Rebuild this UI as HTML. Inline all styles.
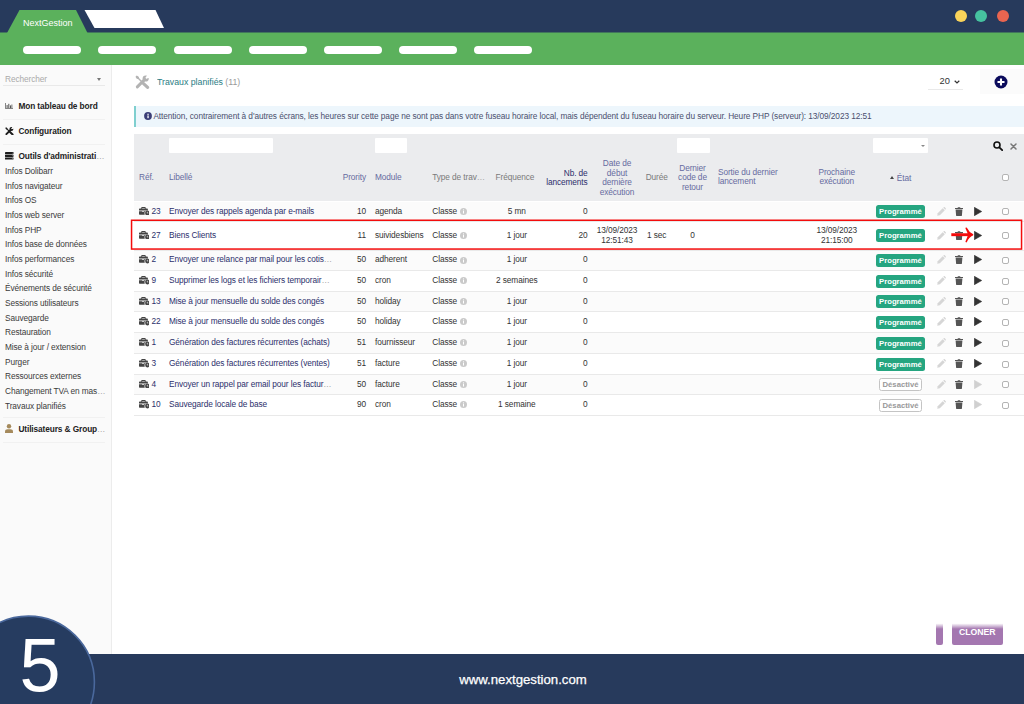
<!DOCTYPE html>
<html lang="fr">
<head>
<meta charset="utf-8">
<title>NextGestion - Travaux planifiés</title>
<style>
*{box-sizing:border-box;margin:0;padding:0}
html,body{width:1024px;height:704px;overflow:hidden;background:#fff}
body{font-family:"Liberation Sans",sans-serif;font-size:8px;color:#333;position:relative}
.abs{position:absolute}
#navy{left:0;top:0;width:1024px;height:33px;background:#273a5c}
#green{left:0;top:32px;width:1024px;height:33px;background:#5bb15c;border-top:1px solid #41765c}
#tabtxt{left:23px;top:17px;color:#fff;font-size:9px;line-height:12px}
.pill{top:46px;height:8px;width:58px;border-radius:4px;background:#fff}
.dot{top:10px;width:12px;height:12px;border-radius:50%}
#side{left:0;top:65px;width:112px;height:600px;background:#fafafa;border-right:1px solid #ececec}
#side .it{position:absolute;left:5px;white-space:nowrap;color:#3a3a3a;font-size:8.300px;letter-spacing:-.1px;line-height:10px}
#side .hd{position:absolute;left:18.400px;white-space:nowrap;color:#222;font-weight:bold;font-size:8.300px;letter-spacing:-.1px;line-height:10px}
#side .sep{position:absolute;left:3px;width:102px;height:1px;background:#f1f1f1}
#footer{left:0;top:654px;width:1024px;height:50px;background:#273a5c}
#url{-webkit-text-stroke:.25px #fff;left:0;width:1024px;top:672px;text-align:center;color:#fff;font-size:13.2px;line-height:16px;padding-left:22px}
#five{left:17.800px;top:625.200px;color:#fff;font-size:76.500px;line-height:80px;transform:scaleX(.965);transform-origin:100% 50%}
#title{left:157px;top:77.400px;font-size:9.250px;transform:scaleX(.947);transform-origin:0 50%;line-height:11px;color:#2a7d84;white-space:nowrap}
#title span{color:#999}
#info{left:134px;top:106.400px;width:890px;height:20.400px;background:#edf6fc;border-left:2.700px solid #7fcfcf;color:#4a4f6e;font-size:8.300px;letter-spacing:-.087px;line-height:21.400px;white-space:nowrap;padding-left:17.400px;overflow:hidden}
#thead{left:134px;top:133.700px;width:890px;height:67.800px;background:#ebecee}
.fi{position:absolute;background:#fff;border-radius:1px;height:15px;top:4px}
.th{position:absolute;color:#666ba0;font-size:8.300px;letter-spacing:-.1px;line-height:10px;white-space:nowrap}
.row{position:absolute;left:134px;width:890px;box-shadow:inset 0 1px 0 #e9e9e9}
.row.odd{background:#fbfbfb}
.c{position:absolute;white-space:nowrap;font-size:8.300px;letter-spacing:-.1px;line-height:10px;color:#333;top:50%;transform:translateY(-50%);margin-top:-.3px}
.c.lnk{color:#2c2f6b}
.badge{position:absolute;left:741.600px;width:49.700px;height:13px;top:50%;margin-top:-6px;border-radius:2.500px;background:#25a580;color:#fff;font-weight:bold;font-size:7.700px;line-height:14.400px;text-align:center;overflow:hidden}
.badge.off{left:745.300px;width:42.400px;background:#fff;color:#999;border:1px solid #c4c4c4;line-height:12.400px}
.cb{position:absolute;left:867.500px;top:50%;width:7.200px;height:7.200px;margin-top:-2.800px;border:1px solid #b4b4b4;border-radius:2px;background:#fff}
.btn{top:622px;height:23px;border-radius:0 0 2px 2px;background:linear-gradient(#fff 0,#fff 6%,#a477b0 30%,#a477b0 100%);color:#fff;font-weight:bold;font-size:8.700px;line-height:10px;padding-top:5px;text-align:center;white-space:nowrap;overflow:hidden}
.el{color:#a5a5a5;font-weight:normal}
</style>
</head>
<body>
<div class="abs" id="navy"></div>
<div class="abs" id="green"></div>
<svg class="abs" style="left:0;top:0" width="200" height="40" viewBox="0 0 200 40">
<polygon points="7,33 19.5,10 76,10 87.5,33" fill="#5bb15c"/>
<polygon points="84.5,10 155.5,10 164,28 94.5,28" fill="#fff"/>
</svg>
<div class="abs" id="tabtxt">NextGestion</div>
<div class="abs pill" style="left:23px"></div>
<div class="abs pill" style="left:98px"></div>
<div class="abs pill" style="left:174px"></div>
<div class="abs pill" style="left:249px"></div>
<div class="abs pill" style="left:324px"></div>
<div class="abs pill" style="left:399px"></div>
<div class="abs pill" style="left:474px"></div>
<div class="abs dot" style="left:954.500px;background:#f9d35a"></div>
<div class="abs dot" style="left:975px;background:#46c2a0"></div>
<div class="abs dot" style="left:996.500px;background:#e96550"></div>

<div class="abs" id="side">
<div class="it" style="top:9.1px;color:#aaa;left:5px">Rechercher</div>
<div class="abs" style="left:97px;top:13px;width:0;height:0;border-left:2px solid transparent;border-right:2px solid transparent;border-top:3px solid #777"></div>
<div class="sep" style="top:20px;background:#e9e9e9"></div>
<div class="hd" style="top:36.1px">Mon tableau de bord</div>
<div class="sep" style="top:54px"></div>
<div class="hd" style="top:61.1px">Configuration</div>
<div class="sep" style="top:79px"></div>
<div class="hd" style="top:86.1px">Outils d'administrati<span class="el">…</span></div>
<div class="it" style="top:101.1px">Infos Dolibarr</div>
<div class="it" style="top:115.8px">Infos navigateur</div>
<div class="it" style="top:130.4px">Infos OS</div>
<div class="it" style="top:145.1px">Infos web server</div>
<div class="it" style="top:159.7px">Infos PHP</div>
<div class="it" style="top:174.4px">Infos base de données</div>
<div class="it" style="top:189.1px">Infos performances</div>
<div class="it" style="top:203.7px">Infos sécurité</div>
<div class="it" style="top:218.4px">Événements de sécurité</div>
<div class="it" style="top:233.0px">Sessions utilisateurs</div>
<div class="it" style="top:247.7px">Sauvegarde</div>
<div class="it" style="top:262.4px">Restauration</div>
<div class="it" style="top:277.0px">Mise à jour / extension</div>
<div class="it" style="top:291.7px">Purger</div>
<div class="it" style="top:306.3px">Ressources externes</div>
<div class="it" style="top:321.0px">Changement TVA en mas<span class="el">…</span></div>
<div class="it" style="top:335.7px">Travaux planifiés</div>
<div class="sep" style="top:352px"></div>
<div class="hd" style="top:359.1px">Utilisateurs &amp; Group<span class="el">…</span></div>
<div class="sep" style="top:377px"></div>
<svg class="abs" style="left:5px;top:38.200px" width="8" height="6" viewBox="0 0 8 6"><path d="M.4 0v5.600h7.600" fill="none" stroke="#555" stroke-width=".8"/><rect x="1.600" y="2" width="1" height="3" fill="#555"/><rect x="3.300" y=".8" width="1" height="4.200" fill="#555"/><rect x="5" y="2.400" width="1" height="2.600" fill="#555"/><rect x="6.500" y="1.500" width=".8" height="3.500" fill="#555"/></svg>
<svg class="abs" style="left:4.800px;top:61.600px" width="9" height="8.400" viewBox="0 0 15 14">
<path d="M2.300 11.900L8.800 5.400" stroke="#1e1e1e" stroke-width="3.200" stroke-linecap="round" fill="none"/>
<circle cx="10.700" cy="3.500" r="3.300" fill="#1e1e1e"/>
<path d="M10.700 3.500L12.300.2 15 3z" fill="#fafafa"/>
<path d="M11 3.200L13.600.600" stroke="#fafafa" stroke-width="1.700" fill="none"/>
<path d="M1.800 1.800L7.500 7.500" stroke="#1e1e1e" stroke-width="1.800" fill="none"/>
<path d="M.5 1.700L1.700.5 3.700 1.700 4.100 3.100 3.100 4.100 1.700 3.700z" fill="#1e1e1e"/>
<path d="M8.300 8.300L12.600 12.400" stroke="#1e1e1e" stroke-width="3.400" stroke-linecap="round" fill="none"/>
</svg>
<svg class="abs" style="left:5px;top:87.200px" width="8.500" height="7.600" viewBox="0 0 8.500 7.600"><rect x="0" y="0" width="8.500" height="2.200" rx=".4" fill="#1e1e1e"/><rect x="0" y="2.700" width="8.500" height="2.200" rx=".4" fill="#1e1e1e"/><rect x="0" y="5.400" width="8.500" height="2.200" rx=".4" fill="#1e1e1e"/><circle cx="7.300" cy="1.100" r=".45" fill="#bbb"/><circle cx="7.300" cy="3.800" r=".45" fill="#bbb"/><circle cx="7.300" cy="6.500" r=".45" fill="#bbb"/></svg>
<svg class="abs" style="left:5px;top:359px" width="8" height="9" viewBox="0 0 8 9"><circle cx="4" cy="2.3" r="2.2" fill="#a58a5c"/><path d="M0 9V7.5C0 6 1.2 5.2 2.5 5.2h3C6.8 5.2 8 6 8 7.5V9z" fill="#a58a5c"/></svg>
</div>

<div class="abs" id="title">Travaux planifiés <span>(11)</span></div>
<div class="abs" id="info">Attention, contrairement à d'autres écrans, les heures sur cette page ne sont pas dans votre fuseau horaire local, mais dépendent du fuseau horaire du serveur. Heure PHP (serveur): 13/09/2023 12:51</div>
<div class="abs" id="thead">
<div class="fi" style="left:35px;width:104px"></div>
<div class="fi" style="left:241px;width:32px"></div>
<div class="fi" style="left:543px;width:33px"></div>
<div class="fi" style="left:739px;width:55px"></div>
<div class="abs" style="left:787px;top:11px;width:0;height:0;border-left:2px solid transparent;border-right:2px solid transparent;border-top:2.5px solid #888"></div>
<div class="th" style="top:38.7px;left:5.0px;">Réf.</div>
<div class="th" style="top:38.7px;left:35.0px;">Libellé</div>
<div class="th" style="top:38.7px;left:192.0px;width:40px;text-align:right;">Prority</div>
<div class="th" style="top:38.7px;left:241.0px;">Module</div>
<div class="th" style="top:38.7px;left:298.3px;color:#7a7a7a;">Type de trav<span class="el">…</span></div>
<div class="th" style="top:38.7px;left:351.0px;width:60px;text-align:center;color:#7a7a7a;">Fréquence</div>
<div class="th" style="top:34.9px;left:393.6px;width:60px;text-align:right;color:#2c2f6b;line-height:9.5px;">Nb. de<br>lancements</div>
<div class="th" style="top:25.5px;left:453.0px;width:60px;text-align:center;line-height:9.55px;">Date de<br>début<br>dernière<br>exécution</div>
<div class="th" style="top:38.7px;left:502.7px;width:40px;text-align:center;color:#7a7a7a;">Durée</div>
<div class="th" style="top:30.0px;left:533.5px;width:50px;text-align:center;line-height:9.5px;">Dernier<br>code de<br>retour</div>
<div class="th" style="top:34.3px;left:584.0px;line-height:9.4px;">Sortie du dernier<br>lancement</div>
<div class="th" style="top:34.3px;left:672.7px;width:60px;text-align:center;line-height:9.4px;">Prochaine<br>exécution</div>
<div class="th" style="top:39.2px;left:762.8px;">État</div>
<div class="abs" style="left:756px;top:42px;width:0;height:0;border-left:2px solid transparent;border-right:2px solid transparent;border-bottom:3px solid #444"></div>
<svg class="abs" style="left:859px;top:7px" width="10" height="10" viewBox="0 0 10 10"><circle cx="4" cy="4" r="3" fill="none" stroke="#111" stroke-width="1.6"/><path d="M6.3 6.3L9.2 9.2" stroke="#111" stroke-width="1.8" stroke-linecap="round"/></svg>
<svg class="abs" style="left:876px;top:9px" width="7" height="7" viewBox="0 0 7 7"><path d="M1 1L6 6M6 1L1 6" stroke="#777" stroke-width="1.5" stroke-linecap="round"/></svg>
<div class="cb" style="top:44px;margin-top:-3.5px"></div>
</div>
<div id="rows">
<div class="row odd" style="top:201.5px;height:19.0px;box-shadow:none">
<svg class="abs" style="left:4.800px;top:50%;margin-top:-4.300px" width="10.500" height="8.400" viewBox="0 0 11 8" preserveAspectRatio="none"><path d="M3 0h3.4a.6.6 0 0 1 .6.6V1.5h1.6a.7.7 0 0 1 .7.7V3.4H0V2.2a.7.7 0 0 1 .7-.7H2.4V.6A.6.6 0 0 1 3 0zM3.3.9V1.5H6.1V.9z" fill="#444"/><path d="M0 4h3.2v.5h2.1V4h1.3a3 3 0 0 0-.6 3.3H.7A.7.7 0 0 1 0 6.600z" fill="#444"/><circle cx="8.7" cy="5.7" r="2.3" fill="#444"/><path d="M8.7 4.5V5.8H9.7" stroke="#fff" stroke-width=".6" fill="none"/></svg>
<div class="c lnk" style="left:17.5px">23</div>
<div class="c lnk" style="left:35px">Envoyer des rappels agenda par e-mails</div>
<div class="c" style="left:192px;width:40px;text-align:right">10</div>
<div class="c" style="left:241px">agenda</div>
<div class="c" style="left:298.3px">Classe</div><svg class="abs" style="left:326.400px;top:50%;margin-top:-3.200px" width="7" height="7" viewBox="0 0 7 7"><circle cx="3.500" cy="3.500" r="3.500" fill="#cacaca"/><rect x="3" y="2.900" width="1" height="2.600" fill="#fff"/><rect x="3" y="1.400" width="1" height="1" fill="#fff"/></svg>
<div class="c" style="left:352.800px;width:60px;text-align:center">5 mn</div>
<div class="c" style="left:393.6px;width:60px;text-align:right">0</div>
<div class="badge">Programmé</div>
<svg class="abs" style="left:802.700px;top:50%;margin-top:-4.500px" width="9" height="9" viewBox="0 0 9 9"><path d="M.2 8.800l.5-2.600L5.700 1.200l2.100 2.100L2.800 8.300z" fill="#d6d6d6"/><path d="M6.300.7l.6-.6a.5.5 0 0 1 .7 0l1.300 1.300a.5.5 0 0 1 0 .7l-.6.600z" fill="#d6d6d6"/></svg>
<svg class="abs" style="left:821px;top:50%;margin-top:-4.500px" width="8" height="9" viewBox="0 0 8 9"><path d="M0 1h2.500L3 .2h2L5.500 1H8v1H0z" fill="#555"/><path d="M.600 2.600h6.800L6.900 8.400a.7.7 0 0 1-.7.600H1.800a.7.700 0 0 1-.7-.600z" fill="#555"/></svg>
<svg class="abs" style="left:840px;top:50%;margin-top:-4.5px" width="8" height="9" viewBox="0 0 8 9"><path d="M.3.300L7.700 4.500.3 8.700z" fill="#333" stroke="#333" stroke-width=".6" stroke-linejoin="round"/></svg>
<div class="cb"></div>
</div>
<div class="row" style="top:220.5px;height:29.0px">
<svg class="abs" style="left:4.800px;top:50%;margin-top:-4.300px" width="10.500" height="8.400" viewBox="0 0 11 8" preserveAspectRatio="none"><path d="M3 0h3.4a.6.6 0 0 1 .6.6V1.5h1.6a.7.7 0 0 1 .7.7V3.4H0V2.2a.7.7 0 0 1 .7-.7H2.4V.6A.6.6 0 0 1 3 0zM3.3.9V1.5H6.1V.9z" fill="#444"/><path d="M0 4h3.2v.5h2.1V4h1.3a3 3 0 0 0-.6 3.3H.7A.7.7 0 0 1 0 6.600z" fill="#444"/><circle cx="8.7" cy="5.7" r="2.3" fill="#444"/><path d="M8.7 4.5V5.8H9.7" stroke="#fff" stroke-width=".6" fill="none"/></svg>
<div class="c lnk" style="left:17.5px">27</div>
<div class="c lnk" style="left:35px">Biens Clients</div>
<div class="c" style="left:192px;width:40px;text-align:right">11</div>
<div class="c" style="left:241px">suividesbiens</div>
<div class="c" style="left:298.3px">Classe</div><svg class="abs" style="left:326.400px;top:50%;margin-top:-3.200px" width="7" height="7" viewBox="0 0 7 7"><circle cx="3.500" cy="3.500" r="3.500" fill="#cacaca"/><rect x="3" y="2.900" width="1" height="2.600" fill="#fff"/><rect x="3" y="1.400" width="1" height="1" fill="#fff"/></svg>
<div class="c" style="left:352.800px;width:60px;text-align:center">1 jour</div>
<div class="c" style="left:393.6px;width:60px;text-align:right">20</div>
<div class="c" style="left:453px;width:60px;text-align:center;line-height:10.300px">13/09/2023<br>12:51:43</div>
<div class="c" style="left:502.7px;width:40px;text-align:center">1 sec</div>
<div class="c" style="left:533.5px;width:50px;text-align:center">0</div>
<div class="c" style="left:672.7px;width:60px;text-align:center;line-height:10.300px">13/09/2023<br>21:15:00</div>
<div class="badge">Programmé</div>
<svg class="abs" style="left:802.700px;top:50%;margin-top:-4.500px" width="9" height="9" viewBox="0 0 9 9"><path d="M.2 8.800l.5-2.600L5.700 1.200l2.100 2.100L2.800 8.300z" fill="#d6d6d6"/><path d="M6.300.7l.6-.6a.5.5 0 0 1 .7 0l1.300 1.300a.5.5 0 0 1 0 .7l-.6.600z" fill="#d6d6d6"/></svg>
<svg class="abs" style="left:821px;top:50%;margin-top:-4.500px" width="8" height="9" viewBox="0 0 8 9"><path d="M0 1h2.500L3 .2h2L5.500 1H8v1H0z" fill="#555"/><path d="M.600 2.600h6.800L6.900 8.400a.7.7 0 0 1-.7.600H1.800a.7.700 0 0 1-.7-.600z" fill="#555"/></svg>
<svg class="abs" style="left:840px;top:50%;margin-top:-4.5px" width="8" height="9" viewBox="0 0 8 9"><path d="M.3.300L7.700 4.500.3 8.700z" fill="#333" stroke="#333" stroke-width=".6" stroke-linejoin="round"/></svg>
<div class="cb"></div>
</div>
<div class="row odd" style="top:249.5px;height:20.5px">
<svg class="abs" style="left:4.800px;top:50%;margin-top:-4.300px" width="10.500" height="8.400" viewBox="0 0 11 8" preserveAspectRatio="none"><path d="M3 0h3.4a.6.6 0 0 1 .6.6V1.5h1.6a.7.7 0 0 1 .7.7V3.4H0V2.2a.7.7 0 0 1 .7-.7H2.4V.6A.6.6 0 0 1 3 0zM3.3.9V1.5H6.1V.9z" fill="#444"/><path d="M0 4h3.2v.5h2.1V4h1.3a3 3 0 0 0-.6 3.3H.7A.7.7 0 0 1 0 6.600z" fill="#444"/><circle cx="8.7" cy="5.7" r="2.3" fill="#444"/><path d="M8.7 4.5V5.8H9.7" stroke="#fff" stroke-width=".6" fill="none"/></svg>
<div class="c lnk" style="left:17.5px">2</div>
<div class="c lnk" style="left:35px">Envoyer une relance par mail pour les cotis<span class="el">…</span></div>
<div class="c" style="left:192px;width:40px;text-align:right">50</div>
<div class="c" style="left:241px">adherent</div>
<div class="c" style="left:298.3px">Classe</div><svg class="abs" style="left:326.400px;top:50%;margin-top:-3.200px" width="7" height="7" viewBox="0 0 7 7"><circle cx="3.500" cy="3.500" r="3.500" fill="#cacaca"/><rect x="3" y="2.900" width="1" height="2.600" fill="#fff"/><rect x="3" y="1.400" width="1" height="1" fill="#fff"/></svg>
<div class="c" style="left:352.800px;width:60px;text-align:center">1 jour</div>
<div class="c" style="left:393.6px;width:60px;text-align:right">0</div>
<div class="badge">Programmé</div>
<svg class="abs" style="left:802.700px;top:50%;margin-top:-4.500px" width="9" height="9" viewBox="0 0 9 9"><path d="M.2 8.800l.5-2.600L5.700 1.200l2.100 2.100L2.800 8.300z" fill="#d6d6d6"/><path d="M6.300.7l.6-.6a.5.5 0 0 1 .7 0l1.300 1.300a.5.5 0 0 1 0 .7l-.6.600z" fill="#d6d6d6"/></svg>
<svg class="abs" style="left:821px;top:50%;margin-top:-4.500px" width="8" height="9" viewBox="0 0 8 9"><path d="M0 1h2.500L3 .2h2L5.500 1H8v1H0z" fill="#555"/><path d="M.600 2.600h6.800L6.900 8.400a.7.7 0 0 1-.7.600H1.800a.7.700 0 0 1-.7-.600z" fill="#555"/></svg>
<svg class="abs" style="left:840px;top:50%;margin-top:-4.5px" width="8" height="9" viewBox="0 0 8 9"><path d="M.3.300L7.700 4.500.3 8.700z" fill="#333" stroke="#333" stroke-width=".6" stroke-linejoin="round"/></svg>
<div class="cb"></div>
</div>
<div class="row" style="top:270.0px;height:21.0px">
<svg class="abs" style="left:4.800px;top:50%;margin-top:-4.300px" width="10.500" height="8.400" viewBox="0 0 11 8" preserveAspectRatio="none"><path d="M3 0h3.4a.6.6 0 0 1 .6.6V1.5h1.6a.7.7 0 0 1 .7.7V3.4H0V2.2a.7.7 0 0 1 .7-.7H2.4V.6A.6.6 0 0 1 3 0zM3.3.9V1.5H6.1V.9z" fill="#444"/><path d="M0 4h3.2v.5h2.1V4h1.3a3 3 0 0 0-.6 3.3H.7A.7.7 0 0 1 0 6.600z" fill="#444"/><circle cx="8.7" cy="5.7" r="2.3" fill="#444"/><path d="M8.7 4.5V5.8H9.7" stroke="#fff" stroke-width=".6" fill="none"/></svg>
<div class="c lnk" style="left:17.5px">9</div>
<div class="c lnk" style="left:35px">Supprimer les logs et les fichiers temporair<span class="el">…</span></div>
<div class="c" style="left:192px;width:40px;text-align:right">50</div>
<div class="c" style="left:241px">cron</div>
<div class="c" style="left:298.3px">Classe</div><svg class="abs" style="left:326.400px;top:50%;margin-top:-3.200px" width="7" height="7" viewBox="0 0 7 7"><circle cx="3.500" cy="3.500" r="3.500" fill="#cacaca"/><rect x="3" y="2.900" width="1" height="2.600" fill="#fff"/><rect x="3" y="1.400" width="1" height="1" fill="#fff"/></svg>
<div class="c" style="left:352.800px;width:60px;text-align:center">2 semaines</div>
<div class="c" style="left:393.6px;width:60px;text-align:right">0</div>
<div class="badge">Programmé</div>
<svg class="abs" style="left:802.700px;top:50%;margin-top:-4.500px" width="9" height="9" viewBox="0 0 9 9"><path d="M.2 8.800l.5-2.600L5.700 1.200l2.100 2.100L2.800 8.300z" fill="#d6d6d6"/><path d="M6.300.7l.6-.6a.5.5 0 0 1 .7 0l1.300 1.300a.5.5 0 0 1 0 .7l-.6.600z" fill="#d6d6d6"/></svg>
<svg class="abs" style="left:821px;top:50%;margin-top:-4.500px" width="8" height="9" viewBox="0 0 8 9"><path d="M0 1h2.500L3 .2h2L5.500 1H8v1H0z" fill="#555"/><path d="M.600 2.600h6.800L6.900 8.400a.7.7 0 0 1-.7.600H1.800a.7.700 0 0 1-.7-.600z" fill="#555"/></svg>
<svg class="abs" style="left:840px;top:50%;margin-top:-4.5px" width="8" height="9" viewBox="0 0 8 9"><path d="M.3.300L7.700 4.500.3 8.700z" fill="#333" stroke="#333" stroke-width=".6" stroke-linejoin="round"/></svg>
<div class="cb"></div>
</div>
<div class="row odd" style="top:291.0px;height:20.0px">
<svg class="abs" style="left:4.800px;top:50%;margin-top:-4.300px" width="10.500" height="8.400" viewBox="0 0 11 8" preserveAspectRatio="none"><path d="M3 0h3.4a.6.6 0 0 1 .6.6V1.5h1.6a.7.7 0 0 1 .7.7V3.4H0V2.2a.7.7 0 0 1 .7-.7H2.4V.6A.6.6 0 0 1 3 0zM3.3.9V1.5H6.1V.9z" fill="#444"/><path d="M0 4h3.2v.5h2.1V4h1.3a3 3 0 0 0-.6 3.3H.7A.7.7 0 0 1 0 6.600z" fill="#444"/><circle cx="8.7" cy="5.7" r="2.3" fill="#444"/><path d="M8.7 4.5V5.8H9.7" stroke="#fff" stroke-width=".6" fill="none"/></svg>
<div class="c lnk" style="left:17.5px">13</div>
<div class="c lnk" style="left:35px">Mise à jour mensuelle du solde des congés</div>
<div class="c" style="left:192px;width:40px;text-align:right">50</div>
<div class="c" style="left:241px">holiday</div>
<div class="c" style="left:298.3px">Classe</div><svg class="abs" style="left:326.400px;top:50%;margin-top:-3.200px" width="7" height="7" viewBox="0 0 7 7"><circle cx="3.500" cy="3.500" r="3.500" fill="#cacaca"/><rect x="3" y="2.900" width="1" height="2.600" fill="#fff"/><rect x="3" y="1.400" width="1" height="1" fill="#fff"/></svg>
<div class="c" style="left:352.800px;width:60px;text-align:center">1 jour</div>
<div class="c" style="left:393.6px;width:60px;text-align:right">0</div>
<div class="badge">Programmé</div>
<svg class="abs" style="left:802.700px;top:50%;margin-top:-4.500px" width="9" height="9" viewBox="0 0 9 9"><path d="M.2 8.800l.5-2.600L5.700 1.200l2.100 2.100L2.800 8.300z" fill="#d6d6d6"/><path d="M6.300.7l.6-.6a.5.5 0 0 1 .7 0l1.300 1.300a.5.5 0 0 1 0 .7l-.6.600z" fill="#d6d6d6"/></svg>
<svg class="abs" style="left:821px;top:50%;margin-top:-4.500px" width="8" height="9" viewBox="0 0 8 9"><path d="M0 1h2.500L3 .2h2L5.500 1H8v1H0z" fill="#555"/><path d="M.600 2.600h6.800L6.900 8.400a.7.7 0 0 1-.7.600H1.800a.7.700 0 0 1-.7-.600z" fill="#555"/></svg>
<svg class="abs" style="left:840px;top:50%;margin-top:-4.5px" width="8" height="9" viewBox="0 0 8 9"><path d="M.3.300L7.700 4.500.3 8.700z" fill="#333" stroke="#333" stroke-width=".6" stroke-linejoin="round"/></svg>
<div class="cb"></div>
</div>
<div class="row" style="top:311.0px;height:21.0px">
<svg class="abs" style="left:4.800px;top:50%;margin-top:-4.300px" width="10.500" height="8.400" viewBox="0 0 11 8" preserveAspectRatio="none"><path d="M3 0h3.4a.6.6 0 0 1 .6.6V1.5h1.6a.7.7 0 0 1 .7.7V3.4H0V2.2a.7.7 0 0 1 .7-.7H2.4V.6A.6.6 0 0 1 3 0zM3.3.9V1.5H6.1V.9z" fill="#444"/><path d="M0 4h3.2v.5h2.1V4h1.3a3 3 0 0 0-.6 3.3H.7A.7.7 0 0 1 0 6.600z" fill="#444"/><circle cx="8.7" cy="5.7" r="2.3" fill="#444"/><path d="M8.7 4.5V5.8H9.7" stroke="#fff" stroke-width=".6" fill="none"/></svg>
<div class="c lnk" style="left:17.5px">22</div>
<div class="c lnk" style="left:35px">Mise à jour mensuelle du solde des congés</div>
<div class="c" style="left:192px;width:40px;text-align:right">50</div>
<div class="c" style="left:241px">holiday</div>
<div class="c" style="left:298.3px">Classe</div><svg class="abs" style="left:326.400px;top:50%;margin-top:-3.200px" width="7" height="7" viewBox="0 0 7 7"><circle cx="3.500" cy="3.500" r="3.500" fill="#cacaca"/><rect x="3" y="2.900" width="1" height="2.600" fill="#fff"/><rect x="3" y="1.400" width="1" height="1" fill="#fff"/></svg>
<div class="c" style="left:352.800px;width:60px;text-align:center">1 jour</div>
<div class="c" style="left:393.6px;width:60px;text-align:right">0</div>
<div class="badge">Programmé</div>
<svg class="abs" style="left:802.700px;top:50%;margin-top:-4.500px" width="9" height="9" viewBox="0 0 9 9"><path d="M.2 8.800l.5-2.600L5.700 1.200l2.100 2.100L2.800 8.300z" fill="#d6d6d6"/><path d="M6.300.7l.6-.6a.5.5 0 0 1 .7 0l1.300 1.300a.5.5 0 0 1 0 .7l-.6.600z" fill="#d6d6d6"/></svg>
<svg class="abs" style="left:821px;top:50%;margin-top:-4.500px" width="8" height="9" viewBox="0 0 8 9"><path d="M0 1h2.500L3 .2h2L5.500 1H8v1H0z" fill="#555"/><path d="M.600 2.600h6.800L6.900 8.400a.7.7 0 0 1-.7.600H1.800a.7.700 0 0 1-.7-.600z" fill="#555"/></svg>
<svg class="abs" style="left:840px;top:50%;margin-top:-4.5px" width="8" height="9" viewBox="0 0 8 9"><path d="M.3.300L7.700 4.500.3 8.700z" fill="#333" stroke="#333" stroke-width=".6" stroke-linejoin="round"/></svg>
<div class="cb"></div>
</div>
<div class="row odd" style="top:332.0px;height:21.0px">
<svg class="abs" style="left:4.800px;top:50%;margin-top:-4.300px" width="10.500" height="8.400" viewBox="0 0 11 8" preserveAspectRatio="none"><path d="M3 0h3.4a.6.6 0 0 1 .6.6V1.5h1.6a.7.7 0 0 1 .7.7V3.4H0V2.2a.7.7 0 0 1 .7-.7H2.4V.6A.6.6 0 0 1 3 0zM3.3.9V1.5H6.1V.9z" fill="#444"/><path d="M0 4h3.2v.5h2.1V4h1.3a3 3 0 0 0-.6 3.3H.7A.7.7 0 0 1 0 6.600z" fill="#444"/><circle cx="8.7" cy="5.7" r="2.3" fill="#444"/><path d="M8.7 4.5V5.8H9.7" stroke="#fff" stroke-width=".6" fill="none"/></svg>
<div class="c lnk" style="left:17.5px">1</div>
<div class="c lnk" style="left:35px">Génération des factures récurrentes (achats)</div>
<div class="c" style="left:192px;width:40px;text-align:right">51</div>
<div class="c" style="left:241px">fournisseur</div>
<div class="c" style="left:298.3px">Classe</div><svg class="abs" style="left:326.400px;top:50%;margin-top:-3.200px" width="7" height="7" viewBox="0 0 7 7"><circle cx="3.500" cy="3.500" r="3.500" fill="#cacaca"/><rect x="3" y="2.900" width="1" height="2.600" fill="#fff"/><rect x="3" y="1.400" width="1" height="1" fill="#fff"/></svg>
<div class="c" style="left:352.800px;width:60px;text-align:center">1 jour</div>
<div class="c" style="left:393.6px;width:60px;text-align:right">0</div>
<div class="badge">Programmé</div>
<svg class="abs" style="left:802.700px;top:50%;margin-top:-4.500px" width="9" height="9" viewBox="0 0 9 9"><path d="M.2 8.800l.5-2.600L5.700 1.200l2.100 2.100L2.800 8.300z" fill="#d6d6d6"/><path d="M6.300.7l.6-.6a.5.5 0 0 1 .7 0l1.300 1.300a.5.5 0 0 1 0 .7l-.6.600z" fill="#d6d6d6"/></svg>
<svg class="abs" style="left:821px;top:50%;margin-top:-4.500px" width="8" height="9" viewBox="0 0 8 9"><path d="M0 1h2.500L3 .2h2L5.500 1H8v1H0z" fill="#555"/><path d="M.600 2.600h6.800L6.900 8.400a.7.7 0 0 1-.7.600H1.800a.7.700 0 0 1-.7-.600z" fill="#555"/></svg>
<svg class="abs" style="left:840px;top:50%;margin-top:-4.5px" width="8" height="9" viewBox="0 0 8 9"><path d="M.3.300L7.700 4.500.3 8.700z" fill="#333" stroke="#333" stroke-width=".6" stroke-linejoin="round"/></svg>
<div class="cb"></div>
</div>
<div class="row" style="top:353.0px;height:21.0px">
<svg class="abs" style="left:4.800px;top:50%;margin-top:-4.300px" width="10.500" height="8.400" viewBox="0 0 11 8" preserveAspectRatio="none"><path d="M3 0h3.4a.6.6 0 0 1 .6.6V1.5h1.6a.7.7 0 0 1 .7.7V3.4H0V2.2a.7.7 0 0 1 .7-.7H2.4V.6A.6.6 0 0 1 3 0zM3.3.9V1.5H6.1V.9z" fill="#444"/><path d="M0 4h3.2v.5h2.1V4h1.3a3 3 0 0 0-.6 3.3H.7A.7.7 0 0 1 0 6.600z" fill="#444"/><circle cx="8.7" cy="5.7" r="2.3" fill="#444"/><path d="M8.7 4.5V5.8H9.7" stroke="#fff" stroke-width=".6" fill="none"/></svg>
<div class="c lnk" style="left:17.5px">3</div>
<div class="c lnk" style="left:35px">Génération des factures récurrentes (ventes)</div>
<div class="c" style="left:192px;width:40px;text-align:right">51</div>
<div class="c" style="left:241px">facture</div>
<div class="c" style="left:298.3px">Classe</div><svg class="abs" style="left:326.400px;top:50%;margin-top:-3.200px" width="7" height="7" viewBox="0 0 7 7"><circle cx="3.500" cy="3.500" r="3.500" fill="#cacaca"/><rect x="3" y="2.900" width="1" height="2.600" fill="#fff"/><rect x="3" y="1.400" width="1" height="1" fill="#fff"/></svg>
<div class="c" style="left:352.800px;width:60px;text-align:center">1 jour</div>
<div class="c" style="left:393.6px;width:60px;text-align:right">0</div>
<div class="badge">Programmé</div>
<svg class="abs" style="left:802.700px;top:50%;margin-top:-4.500px" width="9" height="9" viewBox="0 0 9 9"><path d="M.2 8.800l.5-2.600L5.700 1.200l2.100 2.100L2.800 8.300z" fill="#d6d6d6"/><path d="M6.300.7l.6-.6a.5.5 0 0 1 .7 0l1.300 1.300a.5.5 0 0 1 0 .7l-.6.600z" fill="#d6d6d6"/></svg>
<svg class="abs" style="left:821px;top:50%;margin-top:-4.500px" width="8" height="9" viewBox="0 0 8 9"><path d="M0 1h2.500L3 .2h2L5.500 1H8v1H0z" fill="#555"/><path d="M.600 2.600h6.800L6.900 8.400a.7.7 0 0 1-.7.600H1.800a.7.700 0 0 1-.7-.600z" fill="#555"/></svg>
<svg class="abs" style="left:840px;top:50%;margin-top:-4.5px" width="8" height="9" viewBox="0 0 8 9"><path d="M.3.300L7.700 4.500.3 8.700z" fill="#333" stroke="#333" stroke-width=".6" stroke-linejoin="round"/></svg>
<div class="cb"></div>
</div>
<div class="row odd" style="top:374.0px;height:20.0px">
<svg class="abs" style="left:4.800px;top:50%;margin-top:-4.300px" width="10.500" height="8.400" viewBox="0 0 11 8" preserveAspectRatio="none"><path d="M3 0h3.4a.6.6 0 0 1 .6.6V1.5h1.6a.7.7 0 0 1 .7.7V3.4H0V2.2a.7.7 0 0 1 .7-.7H2.4V.6A.6.6 0 0 1 3 0zM3.3.9V1.5H6.1V.9z" fill="#444"/><path d="M0 4h3.2v.5h2.1V4h1.3a3 3 0 0 0-.6 3.3H.7A.7.7 0 0 1 0 6.600z" fill="#444"/><circle cx="8.7" cy="5.7" r="2.3" fill="#444"/><path d="M8.7 4.5V5.8H9.7" stroke="#fff" stroke-width=".6" fill="none"/></svg>
<div class="c lnk" style="left:17.5px">4</div>
<div class="c lnk" style="left:35px">Envoyer un rappel par email pour les factur<span class="el">…</span></div>
<div class="c" style="left:192px;width:40px;text-align:right">50</div>
<div class="c" style="left:241px">facture</div>
<div class="c" style="left:298.3px">Classe</div><svg class="abs" style="left:326.400px;top:50%;margin-top:-3.200px" width="7" height="7" viewBox="0 0 7 7"><circle cx="3.500" cy="3.500" r="3.500" fill="#cacaca"/><rect x="3" y="2.900" width="1" height="2.600" fill="#fff"/><rect x="3" y="1.400" width="1" height="1" fill="#fff"/></svg>
<div class="c" style="left:352.800px;width:60px;text-align:center">1 jour</div>
<div class="c" style="left:393.6px;width:60px;text-align:right">0</div>
<div class="badge off">Désactivé</div>
<svg class="abs" style="left:802.700px;top:50%;margin-top:-4.500px" width="9" height="9" viewBox="0 0 9 9"><path d="M.2 8.800l.5-2.600L5.700 1.200l2.100 2.100L2.800 8.300z" fill="#d6d6d6"/><path d="M6.300.7l.6-.6a.5.5 0 0 1 .7 0l1.300 1.300a.5.5 0 0 1 0 .7l-.6.600z" fill="#d6d6d6"/></svg>
<svg class="abs" style="left:821px;top:50%;margin-top:-4.500px" width="8" height="9" viewBox="0 0 8 9"><path d="M0 1h2.500L3 .2h2L5.500 1H8v1H0z" fill="#555"/><path d="M.600 2.600h6.800L6.900 8.400a.7.7 0 0 1-.7.600H1.800a.7.700 0 0 1-.7-.600z" fill="#555"/></svg>
<svg class="abs" style="left:840px;top:50%;margin-top:-4.5px" width="8" height="9" viewBox="0 0 8 9"><path d="M.3.300L7.700 4.500.3 8.700z" fill="#d0d0d0" stroke="#d0d0d0" stroke-width=".6" stroke-linejoin="round"/></svg>
<div class="cb"></div>
</div>
<div class="row" style="top:394.0px;height:21.0px">
<svg class="abs" style="left:4.800px;top:50%;margin-top:-4.300px" width="10.500" height="8.400" viewBox="0 0 11 8" preserveAspectRatio="none"><path d="M3 0h3.4a.6.6 0 0 1 .6.6V1.5h1.6a.7.7 0 0 1 .7.7V3.4H0V2.2a.7.7 0 0 1 .7-.7H2.4V.6A.6.6 0 0 1 3 0zM3.3.9V1.5H6.1V.9z" fill="#444"/><path d="M0 4h3.2v.5h2.1V4h1.3a3 3 0 0 0-.6 3.3H.7A.7.7 0 0 1 0 6.600z" fill="#444"/><circle cx="8.7" cy="5.7" r="2.3" fill="#444"/><path d="M8.7 4.5V5.8H9.7" stroke="#fff" stroke-width=".6" fill="none"/></svg>
<div class="c lnk" style="left:17.5px">10</div>
<div class="c lnk" style="left:35px">Sauvegarde locale de base</div>
<div class="c" style="left:192px;width:40px;text-align:right">90</div>
<div class="c" style="left:241px">cron</div>
<div class="c" style="left:298.3px">Classe</div><svg class="abs" style="left:326.400px;top:50%;margin-top:-3.200px" width="7" height="7" viewBox="0 0 7 7"><circle cx="3.500" cy="3.500" r="3.500" fill="#cacaca"/><rect x="3" y="2.900" width="1" height="2.600" fill="#fff"/><rect x="3" y="1.400" width="1" height="1" fill="#fff"/></svg>
<div class="c" style="left:352.800px;width:60px;text-align:center">1 semaine</div>
<div class="c" style="left:393.6px;width:60px;text-align:right">0</div>
<div class="badge off">Désactivé</div>
<svg class="abs" style="left:802.700px;top:50%;margin-top:-4.500px" width="9" height="9" viewBox="0 0 9 9"><path d="M.2 8.800l.5-2.600L5.700 1.200l2.100 2.100L2.800 8.300z" fill="#d6d6d6"/><path d="M6.300.7l.6-.6a.5.5 0 0 1 .7 0l1.300 1.300a.5.5 0 0 1 0 .7l-.6.600z" fill="#d6d6d6"/></svg>
<svg class="abs" style="left:821px;top:50%;margin-top:-4.500px" width="8" height="9" viewBox="0 0 8 9"><path d="M0 1h2.500L3 .2h2L5.500 1H8v1H0z" fill="#555"/><path d="M.600 2.600h6.800L6.900 8.400a.7.7 0 0 1-.7.600H1.800a.7.700 0 0 1-.7-.600z" fill="#555"/></svg>
<svg class="abs" style="left:840px;top:50%;margin-top:-4.5px" width="8" height="9" viewBox="0 0 8 9"><path d="M.3.300L7.700 4.500.3 8.700z" fill="#d0d0d0" stroke="#d0d0d0" stroke-width=".6" stroke-linejoin="round"/></svg>
<div class="cb"></div>
</div>
</div>
<div class="abs" style="left:134px;top:415px;width:890px;height:1px;background:#e9e9e9"></div>

<svg class="abs" style="left:134.500px;top:75px" width="15" height="14" viewBox="0 0 15 14">
<path d="M2.300 11.900L8.800 5.400" stroke="#b3b3b3" stroke-width="2.900" stroke-linecap="round" fill="none"/>
<circle cx="10.700" cy="3.500" r="3.100" fill="#b3b3b3"/>
<path d="M10.700 3.500L12.300.2 15 3z" fill="#fff"/>
<path d="M11 3.200L13.600.600" stroke="#fff" stroke-width="1.700" fill="none"/>
<path d="M1.800 1.800L7.500 7.500" stroke="#b3b3b3" stroke-width="1.400" fill="none"/>
<path d="M.5 1.700L1.700.5 3.700 1.700 4.100 3.100 3.100 4.100 1.700 3.700z" fill="#b3b3b3"/>
<path d="M8.300 8.300L12.600 12.400" stroke="#b3b3b3" stroke-width="3.100" stroke-linecap="round" fill="none"/>
</svg>
<div class="abs" style="left:939.5px;top:75.800px;font-size:9.3px;line-height:11px;color:#333">20</div>
<svg class="abs" style="left:953.5px;top:80px" width="6" height="4" viewBox="0 0 6 4"><path d="M.7.700L3 2.900 5.300.7" stroke="#333" stroke-width="1.200" fill="none"/></svg>
<div class="abs" style="left:928px;top:89px;width:35px;height:1px;background:#e9e9e9"></div>
<div class="abs" style="left:980px;top:69px;width:44px;height:25px;background:#fbfbfb"></div>
<svg class="abs" style="left:994px;top:74.700px" width="14" height="14" viewBox="0 0 14 14"><circle cx="7" cy="7" r="6.500" fill="#0b0b5c"/><path d="M3.500 7h7M7 3.500v7" stroke="#fff" stroke-width="2.100"/></svg>
<svg class="abs" style="left:144px;top:112.400px" width="8" height="8" viewBox="0 0 8 8"><circle cx="4" cy="4" r="3.900" fill="#3c3f78"/><rect x="3.400" y="3.400" width="1.300" height="2.800" fill="#fff"/><rect x="3.400" y="1.700" width="1.300" height="1.200" fill="#fff"/></svg>
<svg class="abs" style="left:129px;top:218px" width="895" height="34" viewBox="0 0 895 34"><rect x="2.550" y="2.250" width="890" height="28.800" fill="none" stroke="#f30c0c" stroke-width="1.500"/></svg>
<svg class="abs" style="left:950px;top:226px" width="25" height="18" viewBox="0 0 25 18">
<path d="M1.300 8.700H20" stroke="#f30c0c" stroke-width="2.900" fill="none"/>
<path d="M16.200 2.200C17.800 5.500 20 7.600 22.600 8.700 20 9.900 17.800 12 16.200 15.600 17.600 12.300 18.400 10.800 18.600 8.700 18.400 6.700 17.600 5.200 16.200 2.200z" fill="#f30c0c" stroke="#f30c0c" stroke-width="1.500" stroke-linejoin="round"/>
</svg>
<div class="abs btn" style="left:936px;width:7px"></div>
<div class="abs btn" style="left:951.500px;width:51.500px">CLONER</div>

<div class="abs" id="footer"></div>
<svg class="abs" style="left:0;top:610px" width="100" height="94" viewBox="0 610 100 94"><circle cx="28.500" cy="682" r="65.900" fill="#263c60" stroke="#4a689c" stroke-width="1.600"/></svg>
<div class="abs" id="five">5</div>
<div class="abs" id="url">www.nextgestion.com</div>
</body>
</html>
